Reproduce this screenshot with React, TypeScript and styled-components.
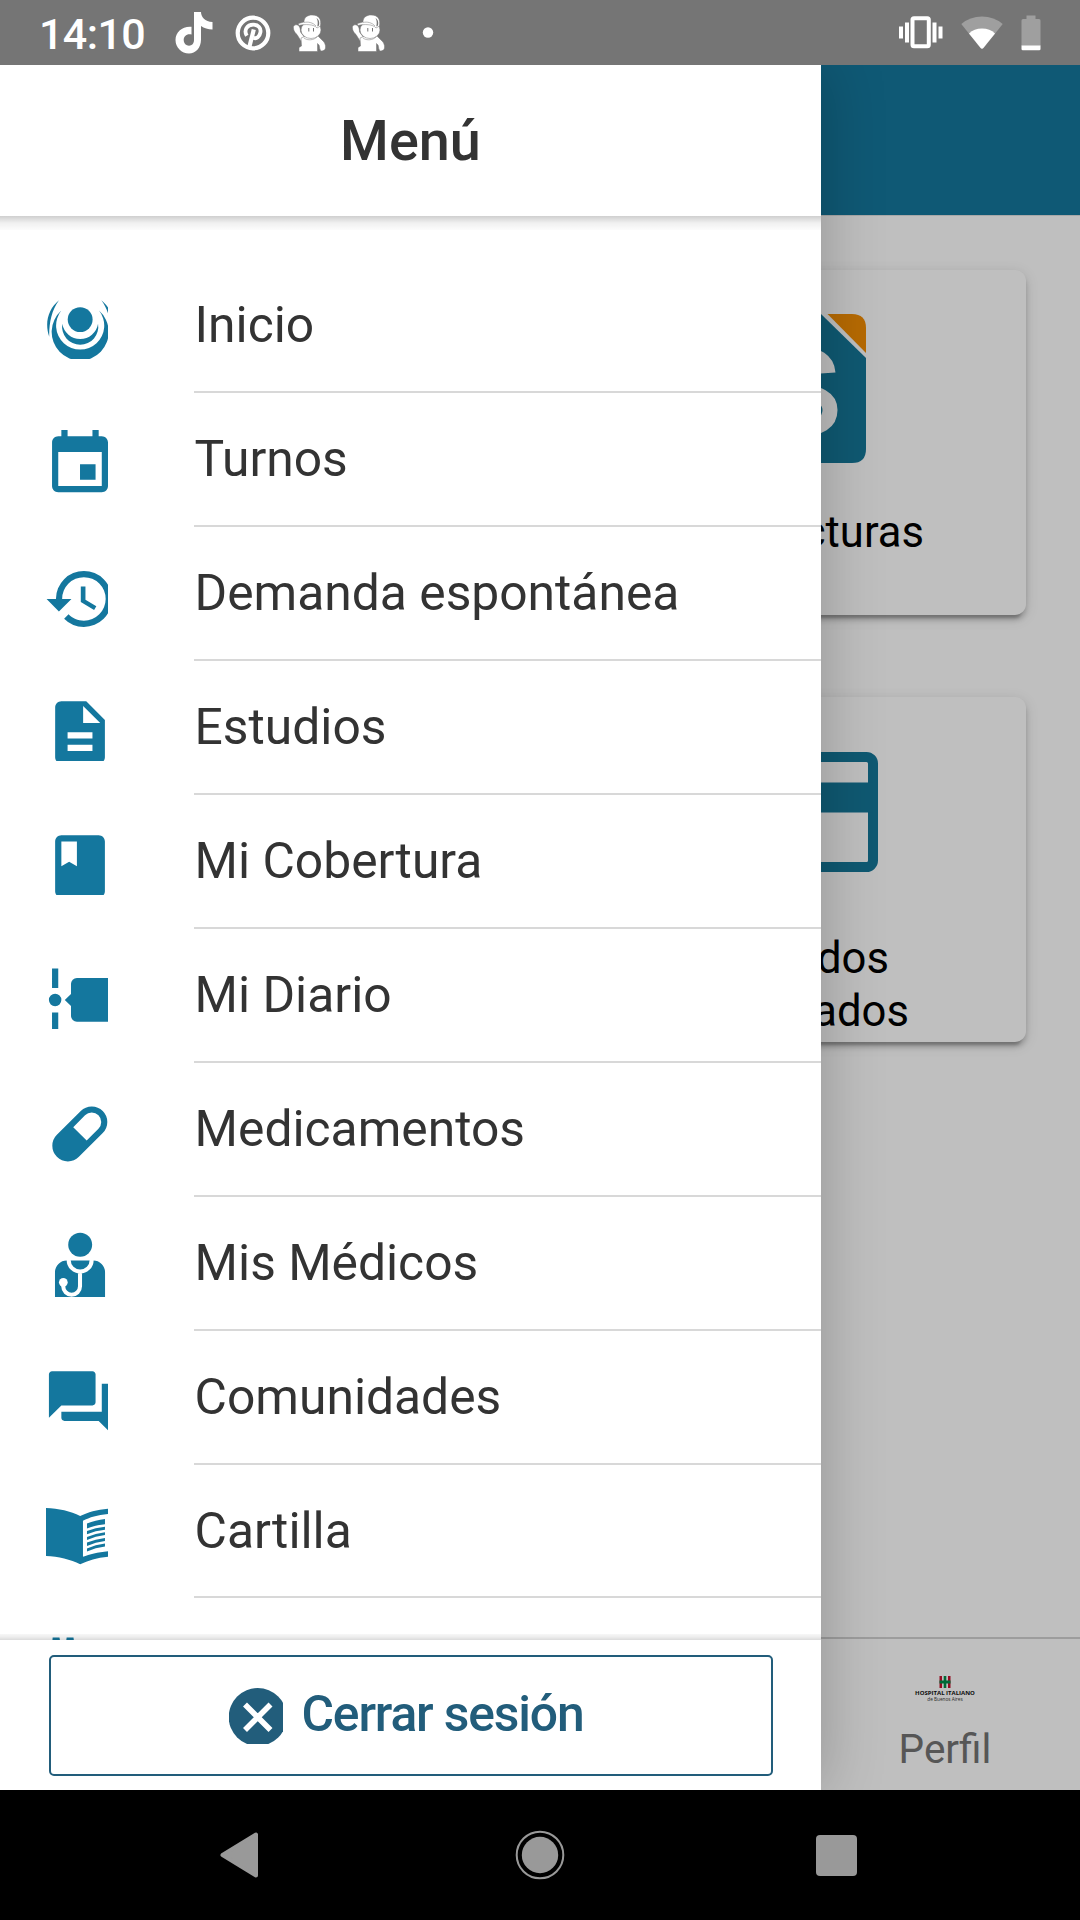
import React from "react";
import styled, { createGlobalStyle } from "styled-components";

const TEAL = "#14779e";

const Global = createGlobalStyle`
  html, body { margin: 0; padding: 0; background: #000; }
  body { font-family: Roboto, "Noto Sans", sans-serif; overflow: hidden; }
  * { box-sizing: border-box; }
  svg { display: block; }
`;

const Screen = styled.div`
  width: 1080px;
  height: 1920px;
  display: flex;
  flex-direction: column;
  overflow: hidden;
`;

const StatusBar = styled.header`
  height: 65px;
  flex: none;
  display: flex;
  align-items: center;
  background: #757575;
  padding: 0 39px 0 39px;
`;

const Clock = styled.span`
  width: 136px;
  font-size: 43px;
  line-height: 65px;
  font-weight: 500;
  letter-spacing: -0.6px;
  color: #fff;
  padding-top: 3px;
`;

const Notifications = styled.div`
  display: flex;
  align-items: center;
  gap: 22px;
  flex: 1;
`;

const SystemIcons = styled.div`
  display: flex;
  align-items: center;
  gap: 18px;
`;

const AppArea = styled.div`
  position: relative;
  height: 1725px;
  flex: none;
  display: flex;
  overflow: hidden;
`;

const Page = styled.div`
  flex: 1;
  display: flex;
  flex-direction: column;
  background: #fff;
`;

const PageHeader = styled.div`
  height: 150px;
  flex: none;
  background: #15779c;
  box-shadow: 0 1px 0 rgba(0, 0, 0, 0.12);
`;

const CardGrid = styled.div`
  flex: 1;
  display: grid;
  grid-template-columns: 446px 446px;
  grid-auto-rows: 345px;
  justify-content: end;
  column-gap: 80px;
  row-gap: 81.5px;
  padding: 55px 54px 0;
`;

const Card = styled.div<{ $column: number; $gap: number; $top: number }>`
  grid-column: ${(p) => p.$column};
  display: flex;
  flex-direction: column;
  align-items: center;
  gap: ${(p) => p.$gap}px;
  padding-top: ${(p) => p.$top}px;
  border-radius: 11px;
  background: #fff;
  box-shadow: 0 5px 5px rgba(0, 0, 0, 0.16), 0 8px 3px -5px rgba(0, 0, 0, 0.22),
    0 3px 14px rgba(0, 0, 0, 0.14);
`;

const CardLabel = styled.div`
  font-size: 43.6px;
  line-height: 53px;
  color: #000;
  text-align: center;
  white-space: pre-line;
`;

const Tabs = styled.nav`
  height: 153px;
  flex: none;
  display: flex;
  justify-content: flex-end;
  border-top: 2px solid #d2d2d2;
`;

const Tab = styled.div`
  width: 270px;
  display: flex;
  flex-direction: column;
  align-items: center;
  padding-top: 37px;
`;

const LogoName = styled.div`
  margin-top: 1px;
  font: 700 6px/8px "Open Sans", sans-serif;
  color: #111;
  white-space: nowrap;
`;

const LogoCity = styled.div`
  font: 400 4.7px/5px "Open Sans", sans-serif;
  color: #333;
  white-space: nowrap;
`;

const TabLabel = styled.div`
  margin-top: 21px;
  font-size: 40.5px;
  line-height: 52px;
  color: #737373;
`;

const Backdrop = styled.div`
  position: absolute;
  inset: 0;
  background: rgba(0, 0, 0, 0.25);
`;

const Drawer = styled.aside`
  position: absolute;
  top: 0;
  left: 0;
  bottom: 0;
  width: 821px;
  display: flex;
  flex-direction: column;
  background: #fff;
  box-shadow: 0 0 60px rgba(0, 0, 0, 0.24);
`;

const DrawerHeader = styled.div`
  height: 151px;
  flex: none;
  display: flex;
  align-items: center;
  justify-content: center;
  font-size: 55.8px;
  font-weight: 500;
  color: #333;
`;

const EdgeShadow = styled.div<{ $up?: boolean }>`
  height: ${(p) => (p.$up ? 6 : 14)}px;
  flex: none;
  z-index: 1;
  margin-${(p) => (p.$up ? "top" : "bottom")}: -${(p) => (p.$up ? 6 : 14)}px;
  background: linear-gradient(
    ${(p) => (p.$up ? "to top" : "to bottom")},
    rgba(0, 0, 0, ${(p) => (p.$up ? 0.14 : 0.19)}),
    rgba(0, 0, 0, ${(p) => (p.$up ? 0.07 : 0.06)}) 50%,
    rgba(0, 0, 0, ${(p) => (p.$up ? 0.03 : 0.01)})
  );
`;

const MenuList = styled.ul`
  flex: 1;
  min-height: 0;
  overflow: hidden;
  margin: 0;
  padding: 43.1px 0 0 46px;
  list-style: none;
`;

const MenuRow = styled.li`
  height: 133.94px;
  display: flex;
  gap: 86px;
`;

const IconSlot = styled.span`
  flex: none;
  width: 62px;
  padding-top: 34px;
  color: ${TEAL};
`;

const MenuLabel = styled.span`
  flex: 1;
  border-bottom: 2px solid #d8d8d8;
  padding: 34px 0 0 0.6px;
  font-size: 49.75px;
  line-height: 64px;
  color: #333;
`;

const DrawerFooter = styled.div`
  height: 150px;
  flex: none;
  display: flex;
  padding: 15px 48px 14px 49px;
  background: #fff;
`;

const LogoutButton = styled.button`
  flex: 1;
  display: flex;
  align-items: center;
  justify-content: center;
  gap: 19px;
  padding: 1px 10px 0 0;
  border: 2px solid #225d7b;
  border-radius: 5px;
  background: #fff;
  font: 500 49.8px/60px Roboto, sans-serif;
  letter-spacing: -1.15px;
  color: #225d7b;
`;

const LogoutText = styled.span`
  margin-top: -5px;
`;

const NavBar = styled.footer`
  height: 130px;
  flex: none;
  display: flex;
  align-items: center;
  justify-content: space-between;
  padding: 0 223px 0 219px;
  background: #000;
`;

const paths: Record<string, React.ReactNode> = {
  home: (
    <>
      <circle cx="12.05" cy="8.55" r="4" />
      <path d="M6.31 9.9A5.82 5.82 0 1 0 17.8 9.9A5.82 5.82 0 0 1 6.31 9.9Z" />
      <path d="M5.99 5.65A9.17 9.17 0 1 0 18.11 5.65A7.74 7.74 0 1 1 5.99 5.65Z" />
      <path d="M5.24 2.3C1.9 5 .5 9.4 2.1 14.1C2 9.8 2.8 5.6 5.24 2.3Z" />
      <path d="M18.86 2.3C22.2 5 23.6 9.4 22 14.1C22.1 9.8 21.3 5.6 18.86 2.3Z" />
    </>
  ),
  event: (
    <path d="M17 12h-5v5h5v-5zM16 1v2H8V1H6v2H5c-1.11 0-1.99.9-1.99 2L3 19c0 1.1.89 2 2 2h14c1.1 0 2-.9 2-2V5c0-1.1-.9-2-2-2h-1V1h-2zm3 18H5V8h14v11z" />
  ),
  history: (
    <path
      transform="translate(.25 .2)"
      d="M13.5 8H12v5l4.28 2.54.72-1.21-3.5-2.08V8M13 3a9 9 0 0 0-9 9H1l3.96 4.03L9 12H6a7 7 0 0 1 7-7 7 7 0 0 1 7 7 7 7 0 0 1-7 7c-1.93 0-3.68-.79-4.94-2.06l-1.42 1.42A8.9 8.9 0 0 0 13 21a9 9 0 0 0 9-9 9 9 0 0 0-9-9"
    />
  ),
  document: (
    <path d="M14 2H6c-1.1 0-1.99.9-1.99 2L4 20c0 1.1.89 2 1.99 2H18c1.1 0 2-.9 2-2V8l-6-6zm2 16H8v-2h8v2zm0-4H8v-2h8v2zm-3-5V3.5L18.5 9H13z" />
  ),
  book: (
    <path d="M18 2H6c-1.1 0-2 .9-2 2v16c0 1.1.9 2 2 2h12c1.1 0 2-.9 2-2V4c0-1.1-.9-2-2-2zM6 4h5v8l-2.5-1.5L6 12V4z" />
  ),
  timeline: (
    <path d="M3 1.8h2V8H3zM3 15.9h2V22H3zM4 9.9a2 2 0 1 1 0 4a2 2 0 0 1 0-4zM22.6 6.7V17a1.9 1.9 0 0 1-1.9 1.9H11A1.9 1.9 0 0 1 9.1 17V13.8L7.1 11.9L9.1 10V6.7A1.9 1.9 0 0 1 11 4.8H20.7A1.9 1.9 0 0 1 22.6 6.7Z" />
  ),
  pill: (
    <path
      fillRule="evenodd"
      d="M12.24 4.51A5 5 0 0 1 19.31 11.59L11.64 19.24A5 5 0 0 1 4.56 12.16ZM9.82 9.69L14.14 14.01L17.93 10.21A3.05 3.05 0 0 0 13.61 5.89Z"
    />
  ),
  doctor: (
    <>
      <circle cx="12.05" cy="4.4" r="3.85" />
      <path d="M3.95 23V13.3A3.8 3.8 0 0 1 7.75 9.5H16.25A3.8 3.8 0 0 1 20.05 13.3V23Z" />
      <g fill="none" stroke="#fff" strokeWidth="1.3">
        <path d="M8.35 9.3C8.35 11.4 10 13 12.05 13S15.74 11.4 15.74 9.3M12 13V17.8A2.7 2.7 0 0 1 6.6 17.8V16.5" />
      </g>
      <circle cx="6.63" cy="16.5" r="1.4" fill="#fff" />
    </>
  ),
  forum: (
    <path d="M21 6h-2v9H6v2c0 .55.45 1 1 1h11l4 4V7c0-.55-.45-1-1-1zm-4 6V3c0-.55-.45-1-1-1H3c-.55 0-1 .45-1 1v14l4-4h10c.55 0 1-.45 1-1z" />
  ),
  reader: (
    <>
      <path d="M1 2.9C5 3 9 3.9 12.05 5.5C15 4 18.5 3.1 23 3V18.4C18.5 18.6 15 19.5 12.05 21C9 19.4 5 18.4 1 18.3Z" />
      <path fill="#fff" d="M12.95 7C15.5 5.7 18.5 4.9 23 4.7V16.6C18.5 16.9 15.5 17.5 12.95 18.6Z" />
      <path d="M14.24 7.9C16 7.2 18 6.6 20.03 6.4V8.1C18 8.3 16 8.7 14.24 9.5ZM14.24 10.3Q17 9.1 20.03 8.9V9.85Q17 10.1 14.24 11.3ZM14.24 12.2Q17 11 20.03 10.7V11.6Q17 12 14.24 13.2ZM14.24 14Q17 12.8 20.03 12.5V13.5Q17 13.9 14.24 15.1ZM14.24 15.9Q17 14.6 20.03 14.3V15.3Q17 15.7 14.24 16.9Z" />
    </>
  ),
  more: <path d="M3.2 1.800H5.4L5.800 4H3ZM7.700 1.800H9.900L10.2 4H7.4Z" />,
};

const items: [string, string][] = [
  ["home", "Inicio"],
  ["event", "Turnos"],
  ["history", "Demanda espontánea"],
  ["document", "Estudios"],
  ["book", "Mi Cobertura"],
  ["timeline", "Mi Diario"],
  ["pill", "Medicamentos"],
  ["doctor", "Mis Médicos"],
  ["forum", "Comunidades"],
  ["reader", "Cartilla"],
  ["more", ""],
];

const MenuIcon = ({ name }: { name: string }) => (
  <svg width="62" height="66" viewBox="1.06 0 19.94 21.22" fill="currentColor">
    {paths[name]}
  </svg>
);

const TikTok = () => (
  <svg width="38" height="42" viewBox="0 0 38 42" fill="#fff">
    <path d="M19 0H26C26 5 30 9.5 37.5 10V17.5C33 17.5 29 16 26 14V27.5C26 36 20.5 41.5 14 41.5C6.500 41.500 0.500 35.500 0.500 28C0.500 20 7.500 14 16.500 14.800V22.500C12 21.300 8.700 24 8.700 28C8.700 31.500 11.200 33.700 14 33.700C17 33.700 19 31.500 19 28Z" />
  </svg>
);

const Pinterest = () => (
  <svg width="36" height="36" viewBox="0 0 36 36" fill="none" stroke="#fff">
    <circle cx="18" cy="18" r="15.3" strokeWidth="4.2" />
    <path d="M11.8 20.8C8.500 15.200 12 9.700 18.200 9.700C23.500 9.700 26.200 13 25.400 17.400C24.600 22 21.500 24.200 18.500 22.800" strokeWidth="3.800" />
    <path d="M18.800 14.500L13.800 34" strokeWidth="4.200" />
  </svg>
);

const Mascot = () => (
  <svg width="37" height="38" viewBox="1 0 37 38">
    <g fill="#fff" stroke="#757575" strokeWidth=".5">
      <path d="M3 11C0 12 1.500 18 5 20.500L9 27L13 24L8.500 18C8.500 13 6.500 10 3 11Z" />
      <path d="M9 24L14 22L20 23L26 22L32 28C35 33 33.500 37 29.500 37C27 35.500 28 33 27 31L25.500 29.500V37.500H7V33.500L9.500 32Z" />
      <ellipse cx="19" cy="16" rx="10" ry="8.500" />
      <path d="M6.500 9.500L12 8C12 3 16 1 20 1C27 1 29.500 5 28.500 12L25 14C22 10 13 10 6.500 11.500Z" />
      <path d="M12 8.500C16 7.500 21 8.500 24 12M12 24C16 27 22 26 25 23" fill="none" />
    </g>
    <path d="M24.500 4C27.500 6 27.500 9 27 11.500L25.300 12.500C26 9 26 7 24.500 4ZM16.300 14h1v3.500h-1zM21 14h1v3.500h-1z" fill="#757575" />
  </svg>
);

const Vibrate = () => (
  <svg width="44" height="34" viewBox="0 0 44 34" fill="#fff">
    <path d="M0 10.500h4v12H0zM6 6.500h4v20H6zM33.500 6.500h4v20h-4zM39.500 10.500h4v12h-4z" />
    <rect x="13.500" y="2.300" width="16.300" height="28" rx="1.500" fill="none" stroke="#fff" strokeWidth="4" />
  </svg>
);

const Wifi = () => (
  <svg width="42" height="34" viewBox="0 0 42 34">
    <path d="M.3 8Q9 .5 21 .5T41.700 8L23 31.500Q21 34 19 31.500Z" fill="#9f9f9f" />
    <path d="M8 17.500Q13 12.500 21 12.500T34 17.500L22.300 32Q21 33.500 19.700 32Z" fill="#fff" />
  </svg>
);

const Battery = () => (
  <svg width="20" height="36" viewBox="0 0 20 36">
    <path d="M5.500 0.500H14.500V4H18Q19.500 4 19.500 5.500V31H.5V5.500Q.5 4 2 4H5.500Z" fill="#9f9f9f" />
    <path d="M.5 30.500h19v3.500q0 1.300-1.300 1.300H1.800Q.5 35.300.5 34Z" fill="#fff" />
  </svg>
);

const InvoiceIcon = () => (
  <svg width="126" height="149" viewBox="0 0 126 149">
    <path d="M14 0H81L126 44V135Q126 149 112 149H14Q0 149 0 135V14Q0 0 14 0Z" fill="#157799" />
    <path d="M87.500 0H112Q126 0 126 14V39Z" fill="#f38e05" />
    <path
      d="M88 59C87 46 76 41 64 41C50 41 39 48 39 59C39 84 90 70 90 96C90 109 79 114 64 114C49 114 38 108 37 94"
      fill="none"
      stroke="#fff"
      strokeWidth="15"
    />
  </svg>
);

const CreditIcon = () => (
  <svg width="150" height="120" viewBox="0 0 150 120" fill="none" stroke="#157799">
    <rect x="5" y="5" width="140" height="110" rx="6.500" strokeWidth="10" />
    <path d="M5 45.500H145" strokeWidth="30" />
  </svg>
);

const HospitalMark = () => (
  <svg width="12" height="12" viewBox="0 0 12 12">
    <path d="M.5 0h2.500v12H.5zM9 0h2.500v12H9z" fill="#c4122f" />
    <path d="M4.700 0h2.600v4.600H11.500v2.800H7.300V12H4.700V7.400H.5V4.600H4.700z" fill="#008c4a" />
  </svg>
);

const CloseIcon = () => (
  <svg width="54" height="56" viewBox="0 0 54 56">
    <circle cx="28.700" cy="29" r="29" fill="#225d7b" />
    <path d="M16 16.500L41.500 42M41.500 16.500L16 42" stroke="#fff" strokeWidth="5.600" />
  </svg>
);

export default function App() {
  return (
    <Screen>
      <Global />
      <StatusBar>
        <Clock>14:10</Clock>
        <Notifications>
          <TikTok />
          <Pinterest />
          <Mascot />
          <Mascot />
          <svg width="50" height="12" viewBox="0 0 50 12" fill="#fff">
            <circle cx="17" cy="5.500" r="5.200" />
          </svg>
        </Notifications>
        <SystemIcons>
          <Vibrate />
          <Wifi />
          <Battery />
        </SystemIcons>
      </StatusBar>

      <AppArea>
        <Page>
          <PageHeader />
          <CardGrid>
            <Card $column={2} $top={44} $gap={43}>
              <InvoiceIcon />
              <CardLabel>Mis facturas</CardLabel>
            </Card>
            <Card $column={2} $top={55} $gap={60.5}>
              <CreditIcon />
              <CardLabel>{"Métodos\nsolicitados"}</CardLabel>
            </Card>
          </CardGrid>
          <Tabs>
            <Tab>
              <HospitalMark />
              <LogoName>HOSPITAL ITALIANO</LogoName>
              <LogoCity>de Buenos Aires</LogoCity>
              <TabLabel>Perfil</TabLabel>
            </Tab>
          </Tabs>
        </Page>
        <Backdrop />
        <Drawer>
          <DrawerHeader>Menú</DrawerHeader>
          <EdgeShadow />
          <MenuList>
            {items.map(([icon, label]) => (
              <MenuRow key={icon}>
                <IconSlot>
                  <MenuIcon name={icon} />
                </IconSlot>
                <MenuLabel>{label}</MenuLabel>
              </MenuRow>
            ))}
          </MenuList>
          <EdgeShadow $up />
          <DrawerFooter>
            <LogoutButton>
              <CloseIcon />
              <LogoutText>Cerrar sesión</LogoutText>
            </LogoutButton>
          </DrawerFooter>
        </Drawer>
      </AppArea>

      <NavBar>
        <svg width="45" height="46" viewBox="0 0 45 46">
          <path d="M3.500 23L37 2.500V43.500Z" fill="#999" stroke="#999" strokeWidth="4" strokeLinejoin="round" />
        </svg>
        <svg width="50" height="50" viewBox="0 0 50 50">
          <circle cx="25" cy="25" r="23.300" fill="none" stroke="#999" strokeWidth="2" />
          <circle cx="25" cy="25" r="18.200" fill="#999" />
        </svg>
        <svg width="41" height="41" viewBox="0 0 41 41">
          <rect width="41" height="41" rx="4" fill="#999" />
        </svg>
      </NavBar>
    </Screen>
  );
}
